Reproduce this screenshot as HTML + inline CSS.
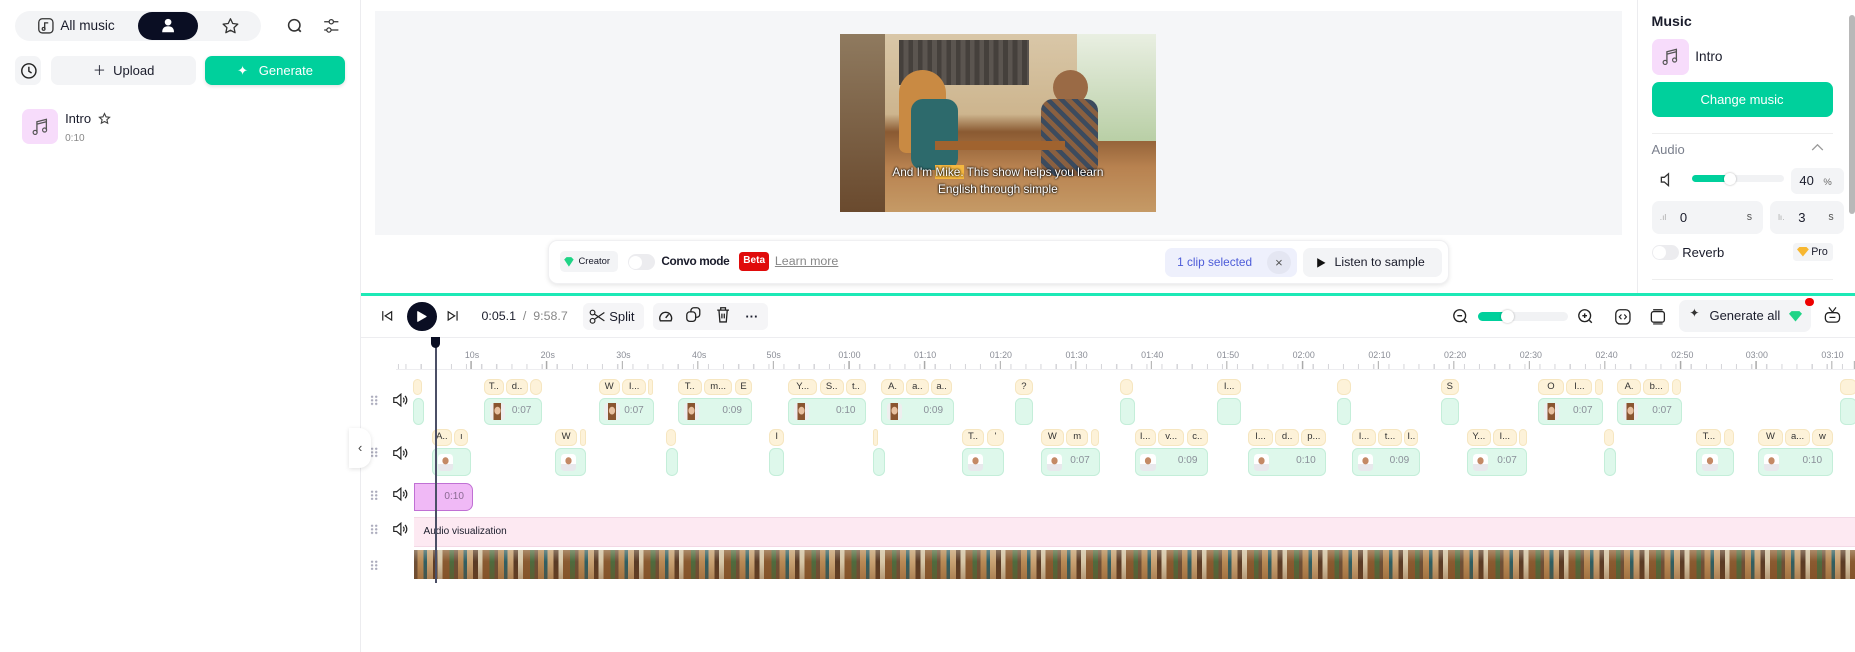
<!DOCTYPE html>
<html><head><meta charset="utf-8">
<style>
*{box-sizing:border-box;margin:0;padding:0}
html,body{width:1855px;height:652px;overflow:hidden;background:#fff}
body{font-family:"Liberation Sans",sans-serif;color:#1a1c2b}
#w{position:absolute;left:0;top:0;width:1568px;height:551px;zoom:1.18304;overflow:hidden}
.a{position:absolute}
.ic{position:absolute}
.ch{position:absolute;height:14px;background:#fdf2d9;border:1px solid #f6e6c0;border-radius:5px;font-size:8px;line-height:12px;text-align:center;color:#333;overflow:hidden}
.cl{position:absolute;height:23px;background:#def8eb;border:1px solid #c4eed9;border-radius:5px;font-size:8.5px;color:#8a8f99;line-height:21px;text-align:right;padding-right:8px}
.av{position:absolute;left:4px;top:4px;width:13px;height:14px;border-radius:3px;background:radial-gradient(ellipse 4px 5px at 50% 45%,#e8c0a0 60%,transparent 70%),linear-gradient(90deg,#eee 0,#eee 25%,#8a5530 25%,#8a5530 75%,#eee 75%)}
.avm{background:radial-gradient(ellipse 3.5px 4px at 50% 40%,#c48a66 70%,transparent 80%),linear-gradient(#fff 0,#fff 60%,#e8e8ec 60%)}
.t1 .ch{top:320px}.t1 .cl{top:336px}
.t2 .ch{top:363px}.t2 .cl{top:379px}
.rl{position:absolute;top:296px;font-size:7.5px;color:#8a8d96;transform:translateX(-50%)}
.hd{position:absolute;left:313px;width:7px;height:9px;background:radial-gradient(circle,#aab 0.8px,transparent 1.2px) 0 0/3.5px 3px}
.sp{position:absolute;left:331px}
</style></head><body><div id="w">

<!-- left panel -->
<div class="a" style="left:304px;top:0;width:1px;height:551px;background:#ececef"></div>
<div class="a" style="left:13px;top:9px;width:208px;height:26px;border-radius:13px;background:#f3f4f6"></div>
<svg class="ic" style="left:31px;top:14px" width="15" height="15" viewBox="0 0 15 15"><rect x="1.5" y="1.5" width="12" height="12" rx="3" fill="none" stroke="#333" stroke-width="1.1"/><path d="M6.5 10V5h3" fill="none" stroke="#333" stroke-width="1.1"/><circle cx="5.6" cy="10" r="1.2" fill="none" stroke="#333"/></svg>
<div class="a" style="left:51px;top:15px;font-size:11.5px">All music</div>
<div class="a" style="left:117px;top:10px;width:50px;height:24px;border-radius:12px;background:#0a0e23"></div>
<svg class="ic" style="left:136px;top:15px" width="12" height="14" viewBox="0 0 12 14"><circle cx="6" cy="3.5" r="2.8" fill="#fff"/><path d="M1 12c0-3.5 2-5 5-5s5 1.5 5 5z" fill="#fff"/></svg>
<svg class="ic" style="left:187px;top:14px" width="16" height="15" viewBox="0 0 16 15"><path d="M8 1.5l1.9 4 4.3.5-3.2 3 .9 4.3L8 11.2l-3.9 2.1.9-4.3-3.2-3 4.3-.5z" fill="none" stroke="#333" stroke-width="1.1" stroke-linejoin="round"/></svg>
<svg class="ic" style="left:242px;top:14px" width="16" height="16" viewBox="0 0 16 16"><circle cx="7" cy="7" r="4.8" fill="none" stroke="#333" stroke-width="1.3"/><path d="M10.5 10.5l2 2" stroke="#333" stroke-width="1.5"/></svg>
<svg class="ic" style="left:273px;top:14px" width="14" height="15" viewBox="0 0 14 15"><path d="M1 4h4M9 4h4M1 11h2M7 11h6" stroke="#333" stroke-width="1"/><circle cx="7" cy="4" r="1.8" fill="none" stroke="#333"/><circle cx="5" cy="11" r="1.8" fill="none" stroke="#333"/></svg>

<div class="a" style="left:13px;top:47px;width:22px;height:25px;border-radius:6px;background:#f3f4f6"></div>
<svg class="ic" style="left:17px;top:52px" width="15" height="15" viewBox="0 0 15 15"><circle cx="7.5" cy="7.5" r="6" fill="none" stroke="#222" stroke-width="1.2"/><path d="M7.5 4v3.8l2.3 1.5" fill="none" stroke="#222" stroke-width="1.2"/></svg>
<div class="a" style="left:43px;top:47px;width:123px;height:25px;border-radius:6px;background:#f3f4f6;font-size:11px;line-height:25px;text-align:center">＋&nbsp; Upload</div>
<div class="a" style="left:173px;top:47px;width:119px;height:25px;border-radius:6px;background:#00d09c;color:#fff;font-size:11px;line-height:25px;text-align:center;box-shadow:0 1px 3px rgba(0,0,0,.12)">✦&nbsp;&nbsp; Generate</div>

<div class="a" style="left:19px;top:92px;width:30px;height:30px;border-radius:6px;background:#f7dcfb"></div>
<svg class="ic" style="left:26px;top:99px" width="16" height="16" viewBox="0 0 16 16"><path d="M5 13V4l8-2v9" fill="none" stroke="#555" stroke-width="1.1"/><path d="M5 6l8-2" stroke="#555" stroke-width="1.1"/><circle cx="3.5" cy="13" r="1.7" fill="none" stroke="#555"/><circle cx="11.5" cy="11" r="1.7" fill="none" stroke="#555"/></svg>
<div class="a" style="left:55px;top:94px;font-size:11px">Intro</div>
<svg class="ic" style="left:83px;top:95px" width="11" height="11" viewBox="0 0 16 15"><path d="M8 1.5l1.9 4 4.3.5-3.2 3 .9 4.3L8 11.2l-3.9 2.1.9-4.3-3.2-3 4.3-.5z" fill="none" stroke="#444" stroke-width="1.4"/></svg>
<div class="a" style="left:55px;top:112px;font-size:8.5px;color:#888">0:10</div>

<!-- preview -->
<div class="a" style="left:317px;top:9px;width:1054px;height:190px;background:#f5f6f8"></div>
<div class="a" style="left:710px;top:29px;width:267px;height:150px;overflow:hidden;background:linear-gradient(180deg,#d9c7a8 0,#cdb58e 45%,#8a5a32 55%,#b88250 75%,#c59a66 100%)">
  <div class="a" style="left:0;top:0;width:38px;height:150px;background:linear-gradient(#8f7a5f,#6a4a2e)"></div>
  <div class="a" style="left:50px;top:5px;width:110px;height:38px;background:repeating-linear-gradient(90deg,#45403c 0 4px,#5b5550 4px 8px)"></div>
  <div class="a" style="left:200px;top:0;width:67px;height:90px;background:linear-gradient(#e9efe2,#b9cfa6)"></div>
  <div class="a" style="left:50px;top:30px;width:40px;height:70px;border-radius:20px 20px 6px 6px;background:#c98a43"></div>
  <div class="a" style="left:60px;top:55px;width:40px;height:60px;border-radius:10px;background:#2d6a6c"></div>
  <div class="a" style="left:180px;top:30px;width:30px;height:30px;border-radius:50%;background:#9a6a45"></div>
  <div class="a" style="left:170px;top:55px;width:48px;height:65px;border-radius:10px;background:repeating-linear-gradient(45deg,#3c4b5e 0 4px,#8a6040 4px 8px)"></div>
  <div class="a" style="left:80px;top:90px;width:110px;height:8px;background:#a0632f"></div>
  <div class="a" style="left:0;top:110px;width:267px;text-align:center;color:#fff;font-size:10px;line-height:14px;text-shadow:0 0 2px #000,0 0 2px #000">And I'm <span style="background:#f4b740">Mike.</span> This show helps you learn<br>English through simple</div>
</div>

<!-- floating bar -->
<div class="a" style="left:463px;top:203px;width:762px;height:37px;border-radius:8px;background:#fff;box-shadow:0 1px 4px rgba(0,0,0,.1);border:1px solid #f0f0f2"></div>
<div class="a" style="left:473px;top:212px;width:49px;height:18px;border-radius:4px;background:#f3f4f6;font-size:8px;line-height:18px;padding-left:16px">Creator</div>
<svg class="ic" style="left:476px;top:216px" width="10" height="10" viewBox="0 0 10 10"><path d="M1 3l2-2h4l2 2-4 6z" fill="#1fd486"/></svg>
<div class="a" style="left:531px;top:215px;width:23px;height:13px;border-radius:7px;background:#ececef"><div style="position:absolute;left:1px;top:1px;width:11px;height:11px;border-radius:50%;background:#fff"></div></div>
<div class="a" style="left:559px;top:215px;font-size:10px;font-weight:bold;letter-spacing:-0.3px">Convo mode</div>
<div class="a" style="left:625px;top:213px;width:25px;height:16px;border-radius:3px;background:#e00b0b;color:#fff;font-size:8.5px;font-weight:bold;line-height:16px;text-align:center">Beta</div>
<div class="a" style="left:655px;top:215px;font-size:10.5px;color:#888;text-decoration:underline">Learn more</div>
<div class="a" style="left:985px;top:210px;width:111px;height:24px;border-radius:6px;background:#eef0fc;font-size:10px;line-height:24px;color:#4c5bd8;padding-left:10px">1 clip selected</div>
<div class="a" style="left:1071px;top:212px;width:20px;height:20px;border-radius:50%;background:#e4e6f2;font-size:11px;line-height:20px;text-align:center;color:#555">×</div>
<div class="a" style="left:1101px;top:210px;width:118px;height:24px;border-radius:6px;background:#f3f4f6;font-size:10.5px;line-height:24px;padding-left:27px">Listen to sample</div>
<svg class="ic" style="left:1112px;top:217px" width="9" height="10" viewBox="0 0 9 10"><path d="M1 1l7 4-7 4z" fill="#111"/></svg>

<!-- right panel -->
<div class="a" style="left:1384px;top:0;width:1px;height:248px;background:#ececef"></div>
<div class="a" style="left:1396px;top:12px;font-size:12px;font-weight:bold">Music</div>
<div class="a" style="left:1396px;top:33px;width:32px;height:30px;border-radius:6px;background:#f7dcfb"></div>
<svg class="ic" style="left:1404px;top:40px" width="16" height="16" viewBox="0 0 16 16"><path d="M5 13V4l8-2v9" fill="none" stroke="#555" stroke-width="1.1"/><path d="M5 6l8-2" stroke="#555" stroke-width="1.1"/><circle cx="3.5" cy="13" r="1.7" fill="none" stroke="#555"/><circle cx="11.5" cy="11" r="1.7" fill="none" stroke="#555"/></svg>
<div class="a" style="left:1433px;top:41px;font-size:11.5px">Intro</div>
<div class="a" style="left:1396px;top:69px;width:153px;height:30px;border-radius:6px;background:#00d09c;color:#fff;font-size:11px;line-height:30px;text-align:center">Change music</div>
<div class="a" style="left:1396px;top:112px;width:153px;height:1px;background:#eee"></div>
<div class="a" style="left:1396px;top:120px;font-size:11px;color:#7a7f8c">Audio</div>
<svg class="ic" style="left:1531px;top:121px" width="11" height="8" viewBox="0 0 11 8"><path d="M1 6l4.5-4.5L10 6" fill="none" stroke="#999" stroke-width="1.1"/></svg>
<svg class="ic" style="left:1402px;top:145px" width="13" height="13" viewBox="0 0 13 13"><path d="M2 4.5h2.5L8 1.5v10L4.5 8.5H2z" fill="none" stroke="#333" stroke-width="1.1"/></svg>
<div class="a" style="left:1430px;top:148px;width:78px;height:6px;border-radius:3px;background:#f1f2f4"></div>
<div class="a" style="left:1430px;top:148px;width:32px;height:6px;border-radius:3px;background:#00d09c"></div>
<div class="a" style="left:1457px;top:146px;width:10px;height:10px;border-radius:50%;background:#fff;box-shadow:0 0 2px rgba(0,0,0,.3)"></div>
<div class="a" style="left:1514px;top:142px;width:45px;height:22px;border-radius:5px;background:#f3f4f6;font-size:11px;line-height:22px;padding-left:7px">40 <span style="font-size:8px;color:#666;margin-left:5px">%</span></div>
<div class="a" style="left:1396px;top:170px;width:94px;height:28px;border-radius:6px;background:#f3f4f6;font-size:11px;line-height:28px;padding-left:24px">0<span style="position:absolute;right:9px;font-size:9px;color:#555">s</span></div>
<div class="a" style="left:1403px;top:180px;font-size:7px;color:#aaa">.ıl</div>
<div class="a" style="left:1496px;top:170px;width:63px;height:28px;border-radius:6px;background:#f3f4f6;font-size:11px;line-height:28px;padding-left:24px">3<span style="position:absolute;right:9px;font-size:9px;color:#555">s</span></div>
<div class="a" style="left:1503px;top:180px;font-size:7px;color:#aaa">lı.</div>
<div class="a" style="left:1396px;top:207px;width:23px;height:13px;border-radius:7px;background:#ececef"><div style="position:absolute;left:1px;top:1px;width:11px;height:11px;border-radius:50%;background:#fff"></div></div>
<div class="a" style="left:1422px;top:207px;font-size:11px">Reverb</div>
<div class="a" style="left:1516px;top:205px;width:33px;height:16px;border-radius:3px;background:#f3f4f6;font-size:9px;line-height:16px;padding-left:15px">Pro</div>
<svg class="ic" style="left:1519px;top:209px" width="10" height="8" viewBox="0 0 10 8"><path d="M0 2l2-2h6l2 2-5 6z" fill="#f7b731"/></svg>
<div class="a" style="left:1396px;top:236px;width:153px;height:1px;background:#eee"></div>
<div class="a" style="left:1563px;top:13px;width:5px;height:168px;border-radius:3px;background:#b8b8b8"></div>

<!-- separator -->
<div class="a" style="left:305px;top:248px;width:1263px;height:2px;background:#1de9b6"></div>

<!-- toolbar -->
<svg class="ic" style="left:322px;top:262px" width="10" height="10" viewBox="0 0 10 10"><path d="M1.5 1v8M9 1.5L3.5 5 9 8.5z" fill="none" stroke="#222" stroke-width="1"/></svg>
<div class="a" style="left:344px;top:255px;width:25px;height:25px;border-radius:50%;background:#0a0e23"></div>
<svg class="ic" style="left:352px;top:262px" width="10" height="11" viewBox="0 0 10 11"><path d="M1.5 1.5l7 4-7 4z" fill="#fff" stroke="#fff" stroke-linejoin="round"/></svg>
<svg class="ic" style="left:378px;top:262px" width="10" height="10" viewBox="0 0 10 10"><path d="M8.5 1v8M1 1.5L6.5 5 1 8.5z" fill="none" stroke="#222" stroke-width="1"/></svg>
<div class="a" style="left:407px;top:261px;font-size:10.5px">0:05.1 <span style="color:#888">&nbsp;/&nbsp; 9:58.7</span></div>
<div class="a" style="left:493px;top:256px;width:51px;height:23px;border-radius:5px;background:#f5f5f7;font-size:11px;line-height:23px;padding-left:22px">Split</div>
<svg class="ic" style="left:498px;top:261px" width="14" height="13" viewBox="0 0 14 13"><circle cx="3" cy="3" r="2" fill="none" stroke="#222"/><circle cx="3" cy="10" r="2" fill="none" stroke="#222"/><path d="M4.5 4.2L13 10M4.5 8.8L13 3" stroke="#222"/></svg>
<div class="a" style="left:552px;top:256px;width:97px;height:23px;border-radius:5px;background:#f5f5f7"></div>
<svg class="ic" style="left:556px;top:261px" width="13" height="12" viewBox="0 0 13 12"><path d="M2 10a5 5 0 1 1 9 0z" fill="none" stroke="#222" stroke-width="1.2"/><path d="M6.5 7.5l2.5-3" stroke="#222" stroke-width="1.2"/></svg>
<svg class="ic" style="left:579px;top:259px" width="14" height="15" viewBox="0 0 14 15"><rect x="5" y="1.5" width="7.5" height="8" rx="2.5" fill="none" stroke="#222" stroke-width="1.1"/><rect x="1.5" y="5" width="7.5" height="8" rx="2.5" fill="#f5f5f7" stroke="#222" stroke-width="1.1"/></svg>
<svg class="ic" style="left:605px;top:259px" width="12" height="15" viewBox="0 0 12 15"><path d="M1 3.5h10M4 3.5V1.5h4v2M2.5 3.5l.8 10h5.4l.8-10M5 6.5v4M7 6.5v4" fill="none" stroke="#222" stroke-width="1.1"/></svg>
<div class="a" style="left:630px;top:261px;font-size:11px;font-weight:bold">···</div>

<svg class="ic" style="left:1227px;top:260px" width="15" height="15" viewBox="0 0 15 15"><circle cx="6.5" cy="6.5" r="5" fill="none" stroke="#222" stroke-width="1.1"/><path d="M4.5 6.5h4M10.5 10.5l2 2" stroke="#222" stroke-width="1.2"/></svg>
<div class="a" style="left:1249px;top:264px;width:76px;height:7px;border-radius:4px;background:#f1f2f4"></div>
<div class="a" style="left:1249px;top:264px;width:25px;height:7px;border-radius:4px;background:#00d09c"></div>
<div class="a" style="left:1269px;top:262px;width:11px;height:11px;border-radius:50%;background:#fff;box-shadow:0 0 2px rgba(0,0,0,.3)"></div>
<svg class="ic" style="left:1333px;top:260px" width="15" height="15" viewBox="0 0 15 15"><circle cx="6.5" cy="6.5" r="5" fill="none" stroke="#222" stroke-width="1.1"/><path d="M4.5 6.5h4M6.5 4.5v4M10.5 10.5l2 2" stroke="#222" stroke-width="1.2"/></svg>
<svg class="ic" style="left:1364px;top:260px" width="15" height="15" viewBox="0 0 15 15"><rect x="1.5" y="1.5" width="12" height="12" rx="3.5" fill="none" stroke="#222" stroke-width="1.1"/><path d="M6.3 5.5L4.5 7.5l1.8 2M8.7 5.5l1.8 2-1.8 2" fill="none" stroke="#222"/></svg>
<svg class="ic" style="left:1394px;top:260px" width="15" height="15" viewBox="0 0 15 15"><rect x="2" y="3" width="11" height="9" rx="2" fill="none" stroke="#222" stroke-width="1.1"/><path d="M3.5 1.5h8M3.5 13.5h8" stroke="#222"/></svg>
<div class="a" style="left:1419px;top:254px;width:112px;height:27px;border-radius:6px;background:#f3f4f6;font-size:11px;line-height:27px;padding-left:26px">Generate all</div>
<div class="a" style="left:1428px;top:259px;font-size:10px;color:#333">✦</div>
<svg class="ic" style="left:1512px;top:263px" width="11" height="9" viewBox="0 0 10 8"><path d="M0 2l2-2h6l2 2-5 6z" fill="#1fd486"/></svg>
<div class="a" style="left:1526px;top:252px;width:7px;height:7px;border-radius:50%;background:#e00"></div>
<svg class="ic" style="left:1541px;top:258px" width="16" height="17" viewBox="0 0 16 17"><path d="M5 2l3 4 3-4" fill="none" stroke="#222"/><rect x="2" y="6.5" width="12" height="8" rx="3" fill="none" stroke="#222" stroke-width="1.1"/><path d="M5.5 10.5h5" stroke="#222"/></svg>

<!-- ruler -->
<div class="a" style="left:305px;top:285px;width:1263px;height:1px;background:#ededf0"></div>
<div class="a" style="left:335px;top:312px;width:1233px;height:1px;background:#ededf0"></div>
<div class="a" style="left:335px;top:308px;width:1233px;height:4px;background:repeating-linear-gradient(90deg,#d4d4d8 0 1px,transparent 1px 12.78px);background-position:8px 0"></div>
<div class="a" style="left:335px;top:305px;width:1233px;height:7px;background:repeating-linear-gradient(90deg,#aaa 0 1px,transparent 1px 63.9px);background-position:-1px 0"></div>
<div class="rl" style="left:399px">10s</div><div class="rl" style="left:463px">20s</div><div class="rl" style="left:527px">30s</div><div class="rl" style="left:591px">40s</div><div class="rl" style="left:654px">50s</div><div class="rl" style="left:718px">01:00</div><div class="rl" style="left:782px">01:10</div><div class="rl" style="left:846px">01:20</div><div class="rl" style="left:910px">01:30</div><div class="rl" style="left:974px">01:40</div><div class="rl" style="left:1038px">01:50</div><div class="rl" style="left:1102px">02:00</div><div class="rl" style="left:1166px">02:10</div><div class="rl" style="left:1230px">02:20</div><div class="rl" style="left:1294px">02:30</div><div class="rl" style="left:1358px">02:40</div><div class="rl" style="left:1422px">02:50</div><div class="rl" style="left:1485px">03:00</div><div class="rl" style="left:1549px">03:10</div>

<!-- track handles -->
<div class="hd" style="top:334px"></div><div class="hd" style="top:378px"></div><div class="hd" style="top:414px"></div><div class="hd" style="top:443px"></div><div class="hd" style="top:473px"></div>
<svg class="sp" style="top:332px" width="14" height="12" viewBox="0 0 14 12"><path d="M1.5 4h2.5l3.5-3v10L4 8H1.5z" fill="none" stroke="#222" stroke-width="1"/><path d="M9.5 4c1 1 1 3 0 4M11 2.5c2 2 2 5 0 7" fill="none" stroke="#222"/></svg>
<svg class="sp" style="top:377px" width="14" height="12" viewBox="0 0 14 12"><path d="M1.5 4h2.5l3.5-3v10L4 8H1.5z" fill="none" stroke="#222" stroke-width="1"/><path d="M9.5 4c1 1 1 3 0 4M11 2.5c2 2 2 5 0 7" fill="none" stroke="#222"/></svg>
<svg class="sp" style="top:412px" width="14" height="12" viewBox="0 0 14 12"><path d="M1.5 4h2.5l3.5-3v10L4 8H1.5z" fill="none" stroke="#222" stroke-width="1"/><path d="M9.5 4c1 1 1 3 0 4M11 2.5c2 2 2 5 0 7" fill="none" stroke="#222"/></svg>
<svg class="sp" style="top:441px" width="14" height="12" viewBox="0 0 14 12"><path d="M1.5 4h2.5l3.5-3v10L4 8H1.5z" fill="none" stroke="#222" stroke-width="1"/><path d="M9.5 4c1 1 1 3 0 4M11 2.5c2 2 2 5 0 7" fill="none" stroke="#222"/></svg>
<div class="a" style="left:295px;top:362px;width:19px;height:34px;border-radius:0 10px 10px 0;background:#fff;box-shadow:0 1px 4px rgba(0,0,0,.12);font-size:11px;line-height:34px;text-align:center;color:#444">‹</div>

<!-- track 1 -->
<div class="t1">
<div class="ch" style="left:349px;width:8px"></div><div class="cl" style="left:349px;width:8px"></div>
<div class="ch" style="left:409px;width:17px">T..</div><div class="ch" style="left:428px;width:18px">d..</div><div class="ch" style="left:448px;width:10px"></div>
<div class="cl" style="left:409px;width:49px"><div class="av"></div>0:07</div>
<div class="ch" style="left:506px;width:18px">W</div><div class="ch" style="left:526px;width:20px">I...</div><div class="ch" style="left:548px;width:4px"></div>
<div class="cl" style="left:506px;width:47px"><div class="av"></div>0:07</div>
<div class="ch" style="left:573px;width:20px">T..</div><div class="ch" style="left:595px;width:24px">m...</div><div class="ch" style="left:621px;width:15px">E</div>
<div class="cl" style="left:573px;width:63px"><div class="av"></div>0:09</div>
<div class="ch" style="left:666px;width:25px">Y...</div><div class="ch" style="left:693px;width:20px">S..</div><div class="ch" style="left:715px;width:17px">t..</div>
<div class="cl" style="left:666px;width:66px"><div class="av"></div>0:10</div>
<div class="ch" style="left:745px;width:19px">A.</div><div class="ch" style="left:766px;width:19px">a..</div><div class="ch" style="left:787px;width:18px">a..</div>
<div class="cl" style="left:745px;width:61px"><div class="av"></div>0:09</div>
<div class="ch" style="left:858px;width:15px">?</div><div class="cl" style="left:858px;width:15px"></div>
<div class="ch" style="left:947px;width:11px"></div><div class="cl" style="left:947px;width:12px"></div>
<div class="ch" style="left:1029px;width:20px">I...</div><div class="cl" style="left:1029px;width:20px"></div>
<div class="ch" style="left:1130px;width:12px"></div><div class="cl" style="left:1130px;width:12px"></div>
<div class="ch" style="left:1218px;width:15px">S</div><div class="cl" style="left:1218px;width:15px"></div>
<div class="ch" style="left:1300px;width:22px">O</div><div class="ch" style="left:1324px;width:22px">I...</div><div class="ch" style="left:1348px;width:7px"></div>
<div class="cl" style="left:1300px;width:55px"><div class="av"></div>0:07</div>
<div class="ch" style="left:1367px;width:20px">A.</div><div class="ch" style="left:1389px;width:22px">b...</div><div class="ch" style="left:1413px;width:8px"></div>
<div class="cl" style="left:1367px;width:55px"><div class="av"></div>0:07</div>
<div class="ch" style="left:1555px;width:15px"></div><div class="cl" style="left:1555px;width:15px"></div>
</div>

<!-- track 2 -->
<div class="t2">
<div class="ch" style="left:365px;width:17px">A..</div><div class="ch" style="left:384px;width:12px">ı</div>
<div class="cl" style="left:365px;width:33px"><div class="av avm"></div></div>
<div class="ch" style="left:469px;width:19px">W</div><div class="ch" style="left:490px;width:5px"></div>
<div class="cl" style="left:469px;width:26px"><div class="av avm"></div></div>
<div class="ch" style="left:563px;width:8px"></div><div class="cl" style="left:563px;width:8px"></div>
<div class="ch" style="left:650px;width:13px">I</div><div class="cl" style="left:650px;width:13px"></div>
<div class="ch" style="left:738px;width:4px"></div><div class="cl" style="left:738px;width:4px"></div>
<div class="ch" style="left:813px;width:19px">T..</div><div class="ch" style="left:834px;width:15px">'</div>
<div class="cl" style="left:813px;width:36px"><div class="av avm"></div></div>
<div class="ch" style="left:880px;width:19px">W</div><div class="ch" style="left:901px;width:19px">m</div><div class="ch" style="left:922px;width:7px"></div>
<div class="cl" style="left:880px;width:50px"><div class="av avm"></div>0:07</div>
<div class="ch" style="left:959px;width:18px">I...</div><div class="ch" style="left:979px;width:22px">v...</div><div class="ch" style="left:1003px;width:18px">c..</div>
<div class="cl" style="left:959px;width:62px"><div class="av avm"></div>0:09</div>
<div class="ch" style="left:1055px;width:21px">I...</div><div class="ch" style="left:1078px;width:20px">d..</div><div class="ch" style="left:1100px;width:21px">p...</div>
<div class="cl" style="left:1055px;width:66px"><div class="av avm"></div>0:10</div>
<div class="ch" style="left:1143px;width:20px">I...</div><div class="ch" style="left:1165px;width:20px">t...</div><div class="ch" style="left:1187px;width:12px">I..</div>
<div class="cl" style="left:1143px;width:57px"><div class="av avm"></div>0:09</div>
<div class="ch" style="left:1240px;width:20px">Y...</div><div class="ch" style="left:1262px;width:20px">I...</div><div class="ch" style="left:1284px;width:7px"></div>
<div class="cl" style="left:1240px;width:51px"><div class="av avm"></div>0:07</div>
<div class="ch" style="left:1356px;width:8px"></div><div class="cl" style="left:1356px;width:8px"></div>
<div class="ch" style="left:1434px;width:21px">T...</div><div class="ch" style="left:1457px;width:9px"></div>
<div class="cl" style="left:1434px;width:32px"><div class="av avm"></div></div>
<div class="ch" style="left:1486px;width:21px">W</div><div class="ch" style="left:1509px;width:21px">a...</div><div class="ch" style="left:1532px;width:17px">w</div>
<div class="cl" style="left:1486px;width:63px"><div class="av avm"></div>0:10</div>
</div>

<!-- music -->
<div class="a" style="left:350px;top:408px;width:50px;height:24px;border-radius:0 6px 6px 0;background:#f0b9f6;border:1px solid #c070d4;font-size:8.5px;line-height:22px;text-align:right;padding-right:7px;color:#8a6a92">0:10</div>
<!-- audio viz -->
<div class="a" style="left:350px;top:437px;width:1218px;height:25px;background:#fde9f2;border-top:1px solid #f3d9e6;border-bottom:1px solid #f3d9e6;font-size:8.5px;line-height:23px;padding-left:8px">Audio visualization</div>
<!-- filmstrip -->
<div class="a" style="left:350px;top:465px;width:1218px;height:24px;background:repeating-linear-gradient(90deg,#6e5038 0 3px,#b98a55 3px 8px,#2f5f63 8px 11px,#c9a273 11px 16px,#5a3b25 16px 20px,#d7c7a8 20px 24px,#8a5a30 24px 30px,#4e6b3e 30px 34px)"></div>
<div class="a" style="left:350px;top:465px;width:1218px;height:24px;background:linear-gradient(180deg,rgba(230,225,210,.35) 0,rgba(0,0,0,0) 40%,rgba(120,70,30,.35) 100%)"></div>
<!-- playhead -->
<div class="a" style="left:368px;top:290px;width:1px;height:203px;background:#4b4f66"></div>
<div class="a" style="left:364px;top:285px;width:8px;height:9px;border-radius:0 0 4px 4px;background:#0a0e23"></div>

</div></body></html>
